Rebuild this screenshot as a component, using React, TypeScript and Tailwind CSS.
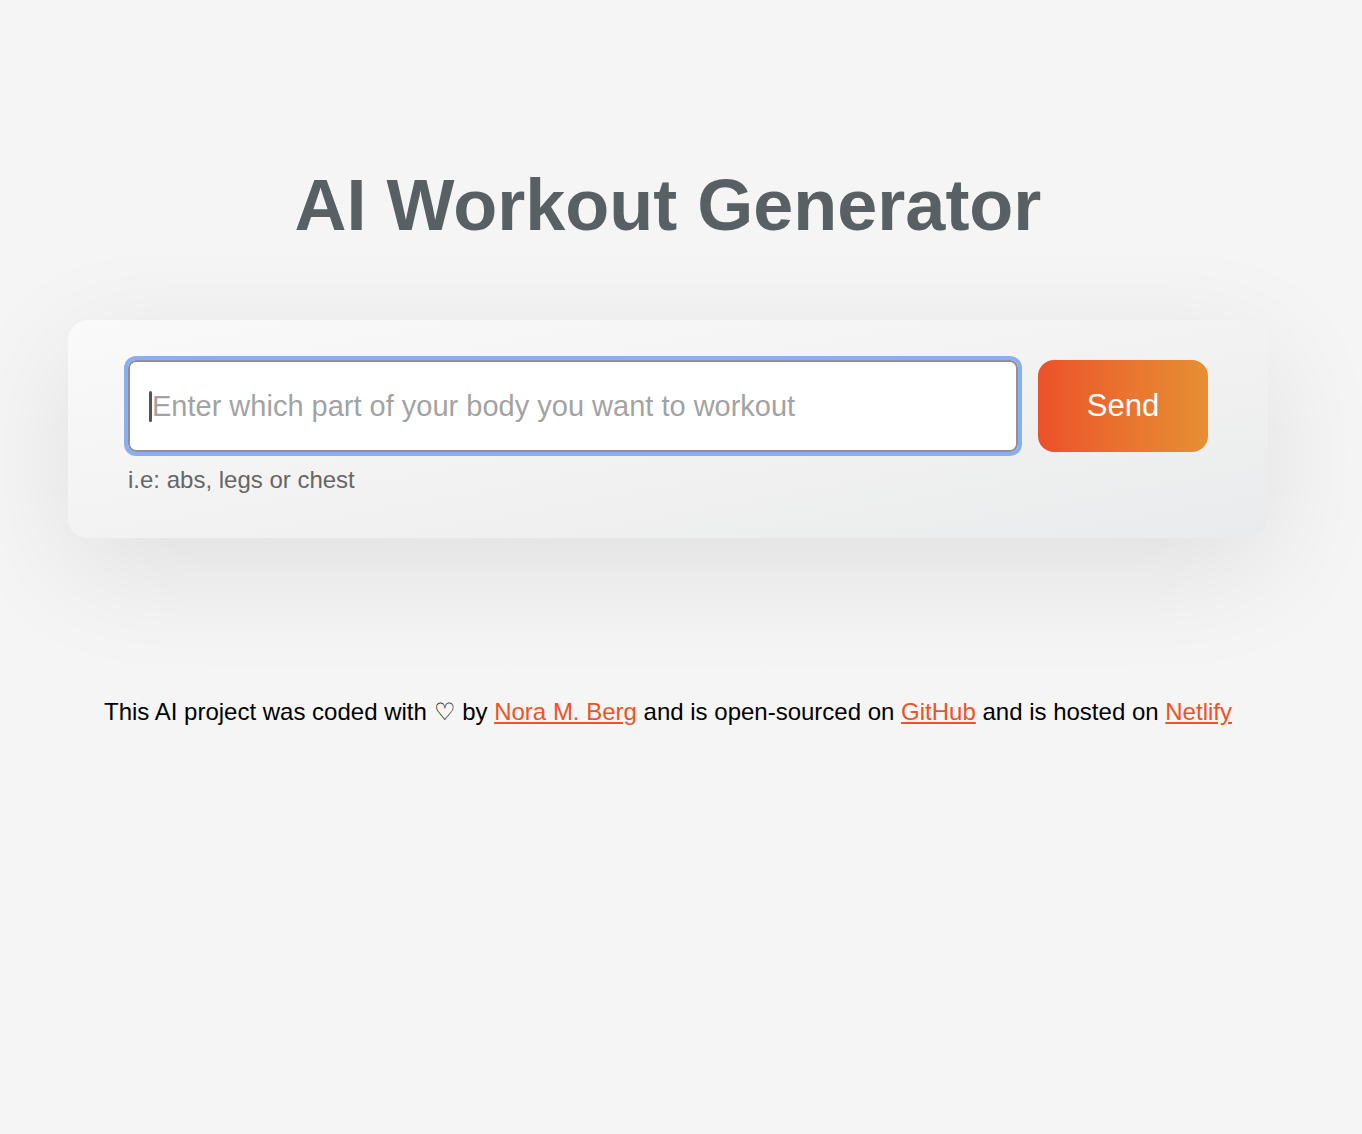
import React from 'react';

export default function App() {
  return (
    <div className="min-h-[1134px] w-full bg-[#f5f5f5] font-['Liberation_Sans',Arial,sans-serif]">
      <main className="w-[1336px] pt-[160px]">
        <h1 className="text-center text-[72px] font-bold leading-[90px] text-[#596063]">
          AI Workout Generator
        </h1>

        {/* Prompt card */}
        <section className="mx-[68px] mt-[70px] rounded-[20px] bg-gradient-to-br from-[#fbfafa] to-[#eaebec] px-[60px] pb-[44px] pt-[40px] shadow-[0_30px_120px_rgba(0,0,0,0.09)]">
          <div className="flex gap-[20px]">
            <div className="relative flex-1">
              <input
                type="text"
                placeholder="Enter which part of your body you want to workout"
                className="h-[92px] w-full rounded-[8px] border-2 border-[#8f8f94] bg-white pl-[22px] text-[29px] text-[#333] outline-4 outline-[#8aaef2] placeholder:text-[#a3a3a3]"
              />
              <span className="absolute left-[21px] top-[31px] h-[31px] w-[3px] rounded-full bg-[#4f5558]" />
            </div>
            <button className="h-[92px] w-[170px] rounded-[16px] bg-gradient-to-r from-[#eb502a] to-[#e68f33] text-[31px] text-white">
              Send
            </button>
          </div>
          <p className="mt-[14px] text-[24px] leading-[28px] text-[#666]">i.e: abs, legs or chest</p>
        </section>

        <footer className="mt-[160px] text-center text-[24px] leading-[28px] text-black">
          This AI project was coded with ♡ by{' '}
          <a href="#" className="text-[#ee5327] underline">Nora M. Berg</a> and is open-sourced on{' '}
          <a href="#" className="text-[#ee5327] underline">GitHub</a> and is hosted on{' '}
          <a href="#" className="text-[#ee5327] underline">Netlify</a>
        </footer>
      </main>
    </div>
  );
}
